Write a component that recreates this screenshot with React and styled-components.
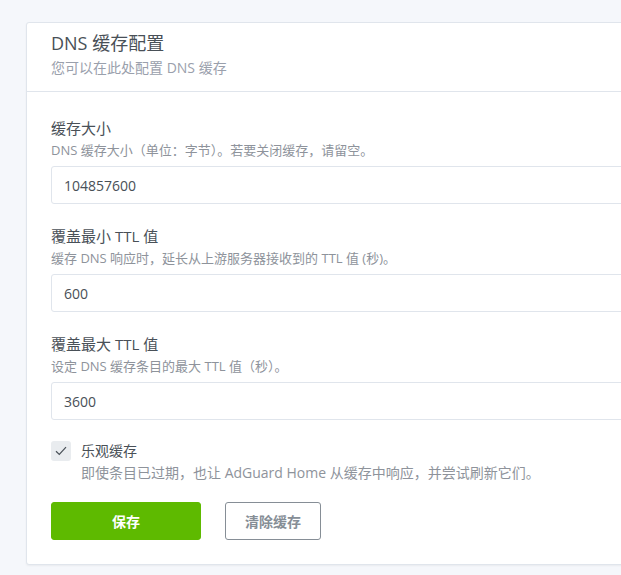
import React from "react";
import styled, { createGlobalStyle } from "styled-components";

const Global = createGlobalStyle`
  html, body { margin: 0; padding: 0; overflow: hidden; background: #f5f7fb; }
  body {
    font-family: "Open Sans", "Noto Sans CJK SC", sans-serif;
    color: #495057;
  }
  * { box-sizing: border-box; }
`;

const Page = styled.div`
  padding: 22px 0 0 26px;
  min-height: 575px;
`;

const Card = styled.section`
  width: 780px;
  background: #fff;
  border: 1px solid #e0e5ec;
  border-radius: 3px;
  box-shadow: 0 1px 2px rgba(0, 0, 0, 0.05);
`;

const Header = styled.header`
  height: 69px;
  padding: 8px 24px 0;
  border-bottom: 1px solid #e0e5ec;
  display: flex;
  flex-direction: column;
`;

const Title = styled.h3`
  margin: 0;
  font-size: 18px;
  font-weight: 400;
  line-height: 24px;
  color: #495057;
`;

const Subtitle = styled.div`
  margin-top: 3px;
  font-size: 14px;
  line-height: 20px;
  color: #9aa0ac;
`;

const Body = styled.div`
  padding: 24px;
  display: flex;
  flex-direction: column;
`;

const Group = styled.div`
  display: flex;
  flex-direction: column;
  margin-bottom: 20px;
`;

const Label = styled.label`
  font-size: 15px;
  line-height: 24px;
  color: #495057;
`;

const Desc = styled.div`
  font-size: 13px;
  line-height: 20px;
  color: #8e939b;
  margin-bottom: 6px;
`;

const Input = styled.input`
  width: 100%;
  height: 38px;
  padding: 0 12px;
  border: 1px solid #e0e5ec;
  border-radius: 3px;
  font: inherit;
  font-size: 14px;
  color: #495057;
  background: #fff;
  outline: none;
`;

const CheckRow = styled.div`
  display: flex;
  align-items: flex-start;
  gap: 10px;
  margin-bottom: 18px;
`;

const Box = styled.span`
  flex: none;
  width: 20px;
  height: 20px;
  margin-top: 1px;
  border-radius: 3px;
  background: #e9ecef;
  display: flex;
  align-items: center;
  justify-content: center;
`;

const CheckText = styled.div`
  display: flex;
  flex-direction: column;
`;

const CheckLabel = styled.div`
  font-size: 14px;
  line-height: 22px;
  color: #495057;
`;

const CheckDesc = styled.div`
  font-size: 14px;
  line-height: 22px;
  color: #8e939b;
`;

const Actions = styled.div`
  display: flex;
  gap: 24px;
`;

const Button = styled.button`
  height: 38px;
  width: ${(p) => p.$w}px;
  border-radius: 3px;
  font: inherit;
  font-size: 14px;
  font-weight: 700;
  cursor: pointer;
  background: ${(p) => (p.$primary ? "#5eba00" : "#fff")};
  color: ${(p) => (p.$primary ? "#fff" : "#868e96")};
  border: 1px solid ${(p) => (p.$primary ? "#5eba00" : "#868e96")};
`;

const fields = [
  { label: "缓存大小", desc: "DNS 缓存大小（单位：字节）。若要关闭缓存，请留空。", value: "104857600" },
  { label: "覆盖最小 TTL 值", desc: "缓存 DNS 响应时，延长从上游服务器接收到的 TTL 值 (秒)。", value: "600" },
  { label: "覆盖最大 TTL 值", desc: "设定 DNS 缓存条目的最大 TTL 值（秒）。", value: "3600" },
];

export default function App() {
  return (
    <Page>
      <Global />
      <Card>
        <Header>
          <Title>DNS 缓存配置</Title>
          <Subtitle>您可以在此处配置 DNS 缓存</Subtitle>
        </Header>
        <Body>
          {fields.map((f) => (
            <Group key={f.label}>
              <Label>{f.label}</Label>
              <Desc>{f.desc}</Desc>
              <Input defaultValue={f.value} />
            </Group>
          ))}
          <CheckRow>
            <Box>
              <svg width="12" height="10" viewBox="0 0 12 10" fill="none">
                <path d="M1 5.2 L4.3 8.4 L11 1.2" stroke="#495057" strokeWidth="1.2" />
              </svg>
            </Box>
            <CheckText>
              <CheckLabel>乐观缓存</CheckLabel>
              <CheckDesc>即使条目已过期，也让 AdGuard Home 从缓存中响应，并尝试刷新它们。</CheckDesc>
            </CheckText>
          </CheckRow>
          <Actions>
            <Button $primary $w={150}>保存</Button>
            <Button $w={96}>清除缓存</Button>
          </Actions>
        </Body>
      </Card>
    </Page>
  );
}
